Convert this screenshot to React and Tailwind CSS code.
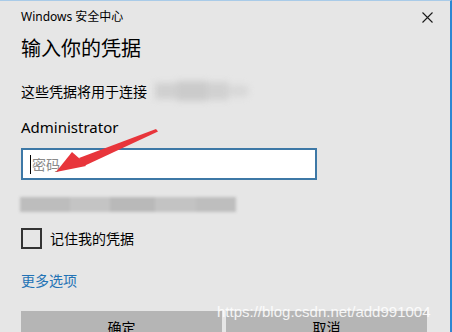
import React from "react";

export default function App() {
  const font = { fontFamily: "'Segoe UI', 'Noto Sans', 'Noto Sans CJK SC', sans-serif" };
  return (
    <div className="w-[452px] h-[332px] bg-[#e6e6e6] border-t border-[#a9cbe8] border-r-2 border-r-[#2c87d3] overflow-hidden relative text-black" style={font}>
      <div className="h-[31px] flex items-center justify-between pl-[21px] pr-[17px]">
        <span className="text-[12px] leading-[16px]">Windows 安全中心</span>
        <svg width="11" height="11" viewBox="0 0 11 11" className="mt-[2px]">
          <path d="M0.5 0.5 L10.5 10.5 M10.5 0.5 L0.5 10.5" stroke="#1a1a1a" strokeWidth="1.1" />
        </svg>
      </div>
      <div className="pl-[21px] h-[30px] leading-[30px] text-[20px] mt-[2px]">输入你的凭据</div>
      <div className="pl-[21px] mt-[17px] h-[20px] flex items-center text-[14px]">
        <span>这些凭据将用于连接</span>
        <div className="ml-[8px] flex items-center blur-[3px]">
          <div className="w-[22px] h-[16px] bg-[#d0d0d0]" />
          <div className="w-[30px] h-[20px] bg-[#cbcbcb]" />
          <div className="w-[22px] h-[18px] bg-[#d1d1d1]" />
          <div className="w-[20px] h-[12px] bg-[#d8d8d8] rounded-full" />
        </div>
      </div>
      <div className="pl-[21px] mt-[16px] h-[20px] leading-[20px] text-[15px]">Administrator</div>
      <div className="ml-[21px] mt-[11px] w-[296px] h-[32px] bg-white border-2 border-[#3d78a6] flex items-center pl-[7px]">
        <div className="w-[1px] h-[19px] bg-black" />
        <span className="text-[14px] text-[#8a8a8a] ml-[1px]">密码</span>
      </div>
      <div className="ml-[20px] mt-[17px] w-[216px] h-[15px] flex blur-[1.5px]">
        <div className="w-[50px] h-full bg-[#bdbdbd]" />
        <div className="w-[40px] h-full bg-[#c4c4c4]" />
        <div className="w-[45px] h-full bg-[#b9b9b9]" />
        <div className="w-[41px] h-full bg-[#c3c3c3]" />
        <div className="w-[40px] h-full bg-[#bebebe]" />
      </div>
      <div className="ml-[21px] mt-[16px] h-[21px] flex items-center">
        <div className="w-[21px] h-[21px] border-2 border-[#333333]" />
        <span className="ml-[8px] text-[14px]">记住我的凭据</span>
      </div>
      <div className="pl-[21px] mt-[22px] h-[20px] leading-[20px] text-[14px] text-[#2373b5]">更多选项</div>
      <div className="ml-[21px] mt-[20px] flex gap-[4px]">
        <div className="w-[201px] h-[32px] bg-[#b5b5b5] flex items-center justify-center text-[14px]">确定</div>
        <div className="w-[201px] h-[32px] bg-[#b5b5b5] flex items-center justify-center text-[14px]">取消</div>
      </div>
      <div className="absolute left-[217px] top-[302px] text-[15px] leading-[18px] text-white/85" style={{ fontFamily: "'Liberation Sans', Arial, sans-serif" }}>
        https://blog.csdn.net/add991004
      </div>
      <svg className="absolute left-0 top-0" width="452" height="332" viewBox="0 0 452 332">
        <polygon points="156,128 158,130.5 84,165 79,157" fill="#e8353b" />
        <polygon points="56,171 72,151 80,158 86,165" fill="#e8353b" />
      </svg>
    </div>
  );
}
